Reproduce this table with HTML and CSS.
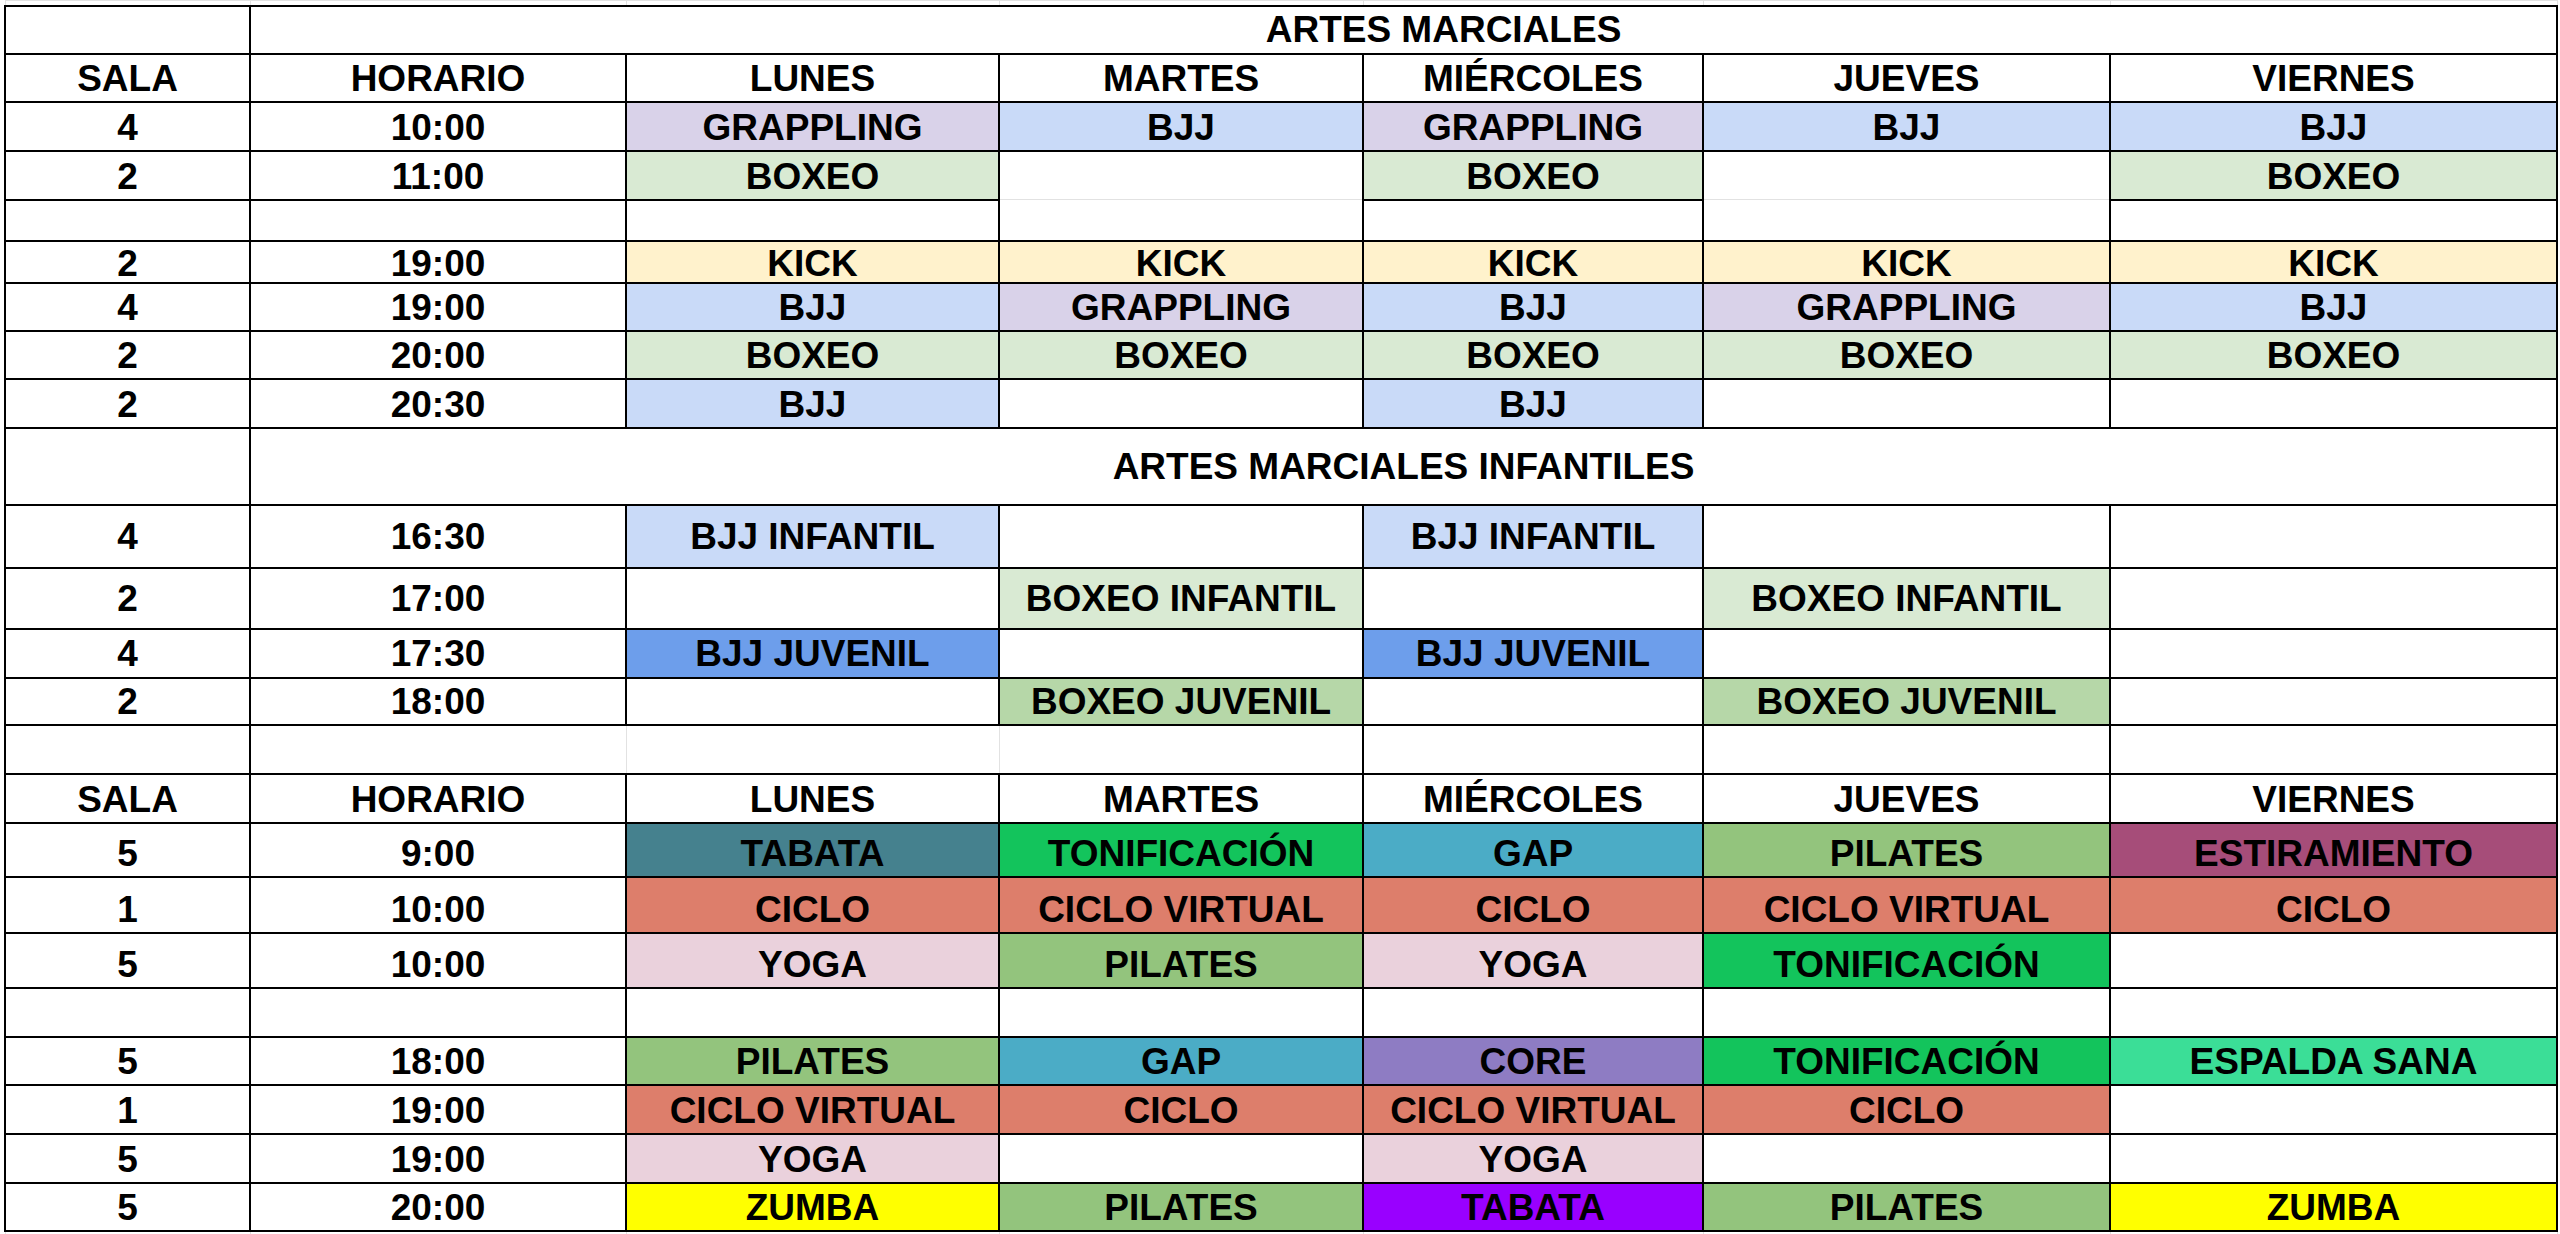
FILE: index.html
```html
<!DOCTYPE html>
<html lang="es">
<head>
<meta charset="utf-8">
<title>Horario de clases</title>
<link rel="stylesheet" href="styles.css">
</head>
<body>
<table class="schedule">
  <colgroup>
    <col class="w-sala"><col class="w-hora"><col class="w-lun"><col class="w-mar"><col class="w-mie"><col class="w-jue"><col class="w-vie">
  </colgroup>
  <tbody>
    <tr class="strip h5"><td></td><td></td><td></td><td></td><td></td><td></td><td></td></tr>

    <tr class="h48"><td></td><td colspan="6" class="title shift">ARTES MARCIALES</td></tr>
    <tr class="h48"><td>SALA</td><td>HORARIO</td><td>LUNES</td><td>MARTES</td><td>MIÉRCOLES</td><td>JUEVES</td><td>VIERNES</td></tr>
    <tr class="h49"><td>4</td><td>10:00</td><td class="c-grap">GRAPPLING</td><td class="c-bjj">BJJ</td><td class="c-grap">GRAPPLING</td><td class="c-bjj">BJJ</td><td class="c-bjj">BJJ</td></tr>
    <tr class="h49"><td>2</td><td>11:00</td><td class="c-box">BOXEO</td><td class="g-b"></td><td class="c-box">BOXEO</td><td class="g-b"></td><td class="c-box">BOXEO</td></tr>
    <tr class="h41"><td></td><td></td><td></td><td class="g-t"></td><td></td><td class="g-t"></td><td></td></tr>
    <tr class="h42 tight"><td>2</td><td>19:00</td><td class="c-kick">KICK</td><td class="c-kick">KICK</td><td class="c-kick">KICK</td><td class="c-kick">KICK</td><td class="c-kick">KICK</td></tr>
    <tr class="h48"><td>4</td><td>19:00</td><td class="c-bjj">BJJ</td><td class="c-grap">GRAPPLING</td><td class="c-bjj">BJJ</td><td class="c-grap">GRAPPLING</td><td class="c-bjj">BJJ</td></tr>
    <tr class="h48"><td>2</td><td>20:00</td><td class="c-box">BOXEO</td><td class="c-box">BOXEO</td><td class="c-box">BOXEO</td><td class="c-box">BOXEO</td><td class="c-box">BOXEO</td></tr>
    <tr class="h49"><td>2</td><td>20:30</td><td class="c-bjj">BJJ</td><td></td><td class="c-bjj">BJJ</td><td></td><td></td></tr>

    <tr class="h77"><td></td><td colspan="6" class="title">ARTES MARCIALES INFANTILES</td></tr>
    <tr class="h63 mid"><td>4</td><td>16:30</td><td class="c-bjj">BJJ INFANTIL</td><td></td><td class="c-bjj">BJJ INFANTIL</td><td></td><td></td></tr>
    <tr class="h61 mid"><td>2</td><td>17:00</td><td></td><td class="c-box">BOXEO INFANTIL</td><td></td><td class="c-box">BOXEO INFANTIL</td><td></td></tr>
    <tr class="h49 mid"><td>4</td><td>17:30</td><td class="c-bjjj">BJJ JUVENIL</td><td></td><td class="c-bjjj">BJJ JUVENIL</td><td></td><td></td></tr>
    <tr class="h47 mid"><td>2</td><td>18:00</td><td></td><td class="c-boxj">BOXEO JUVENIL</td><td></td><td class="c-boxj">BOXEO JUVENIL</td><td></td></tr>
    <tr class="h49"><td></td><td class="g-r"></td><td class="g-l g-r"></td><td class="g-l"></td><td></td><td></td><td></td></tr>

    <tr class="h49"><td>SALA</td><td>HORARIO</td><td>LUNES</td><td>MARTES</td><td>MIÉRCOLES</td><td>JUEVES</td><td>VIERNES</td></tr>
    <tr class="h54"><td>5</td><td>9:00</td><td class="c-teal">TABATA</td><td class="c-toni">TONIFICACIÓN</td><td class="c-gap">GAP</td><td class="c-pil">PILATES</td><td class="c-esti">ESTIRAMIENTO</td></tr>
    <tr class="h56"><td>1</td><td>10:00</td><td class="c-ciclo">CICLO</td><td class="c-ciclo">CICLO VIRTUAL</td><td class="c-ciclo">CICLO</td><td class="c-ciclo">CICLO VIRTUAL</td><td class="c-ciclo">CICLO</td></tr>
    <tr class="h55"><td>5</td><td>10:00</td><td class="c-yoga">YOGA</td><td class="c-pil">PILATES</td><td class="c-yoga">YOGA</td><td class="c-toni">TONIFICACIÓN</td><td></td></tr>
    <tr class="h49"><td></td><td></td><td></td><td></td><td></td><td></td><td></td></tr>
    <tr class="h48"><td>5</td><td>18:00</td><td class="c-pil">PILATES</td><td class="c-gap">GAP</td><td class="c-core">CORE</td><td class="c-toni">TONIFICACIÓN</td><td class="c-esp">ESPALDA SANA</td></tr>
    <tr class="h49"><td>1</td><td>19:00</td><td class="c-ciclo">CICLO VIRTUAL</td><td class="c-ciclo">CICLO</td><td class="c-ciclo">CICLO VIRTUAL</td><td class="c-ciclo">CICLO</td><td></td></tr>
    <tr class="h49"><td>5</td><td>19:00</td><td class="c-yoga">YOGA</td><td></td><td class="c-yoga">YOGA</td><td></td><td></td></tr>
    <tr class="h48"><td>5</td><td>20:00</td><td class="c-zumba">ZUMBA</td><td class="c-pil">PILATES</td><td class="c-tabata">TABATA</td><td class="c-pil">PILATES</td><td class="c-zumba">ZUMBA</td></tr>

    <tr class="strip strip-bottom h4"><td></td><td></td><td></td><td></td><td></td><td></td><td></td></tr>
  </tbody>
</table>
</body>
</html>
```

FILE: styles.css
```css
html, body {
  margin: 0;
  padding: 0;
  background: #ffffff;
}

.schedule {
  border-collapse: collapse;
  table-layout: fixed;
  width: 2552px;
  margin-left: 4px;
  font-family: "Liberation Sans", Arial, sans-serif;
  font-weight: bold;
  font-size: 37px;
  line-height: 37px;
  color: #000000;
}

.w-sala { width: 245px; }
.w-hora { width: 376px; }
.w-lun  { width: 373px; }
.w-mar  { width: 364px; }
.w-mie  { width: 340px; }
.w-jue  { width: 407px; }
.w-vie  { width: 447px; }

.schedule td {
  border: 2px solid #000000;
  padding: 0 0 4px 0;
  text-align: center;
  vertical-align: bottom;
  white-space: nowrap;
  overflow: hidden;
}

.schedule tr.tight td { padding-bottom: 0; }
.schedule tr.mid td { vertical-align: middle; padding: 0; }
.schedule td.title { vertical-align: middle; padding: 0; }
.schedule td.shift { padding-left: 80px; }

/* spreadsheet gridline strips above and below the table */
.schedule tr.strip td {
  border: 1px solid #e2e2e2;
  border-bottom: none;
  padding: 0;
}
.schedule tr.strip-bottom td {
  border-top: none;
  border-bottom: none;
}

/* cells whose edge is only the faint sheet gridline */
.schedule td.g-b { border-bottom: 1px solid #e2e2e2; }
.schedule td.g-t { border-top: 1px solid #e2e2e2; }
.schedule td.g-l { border-left: 1px solid #e2e2e2; }
.schedule td.g-r { border-right: 1px solid #e2e2e2; }

/* row heights */
.h4  { height: 4px; }
.h5  { height: 5px; }
.h41 { height: 41px; }
.h42 { height: 42px; }
.h47 { height: 47px; }
.h48 { height: 48px; }
.h49 { height: 49px; }
.h54 { height: 54px; }
.h55 { height: 55px; }
.h56 { height: 56px; }
.h61 { height: 61px; }
.h63 { height: 63px; }
.h77 { height: 77px; }

/* class colours */
.c-grap   { background: #d9d2e9; }
.c-bjj    { background: #c9daf8; }
.c-box    { background: #d9ead3; }
.c-kick   { background: #fff2cc; }
.c-bjjj   { background: #6d9eeb; }
.c-boxj   { background: #b6d7a8; }
.c-teal   { background: #45818e; }
.c-toni   { background: #13c45c; }
.c-gap    { background: #4bacc6; }
.c-pil    { background: #93c47d; }
.c-esti   { background: #a64d79; }
.c-ciclo  { background: #dd7e6b; }
.c-yoga   { background: #ead1dc; }
.c-core   { background: #8e7cc3; }
.c-esp    { background: #3bde97; }
.c-zumba  { background: #ffff00; }
.c-tabata { background: #9900ff; }
```
